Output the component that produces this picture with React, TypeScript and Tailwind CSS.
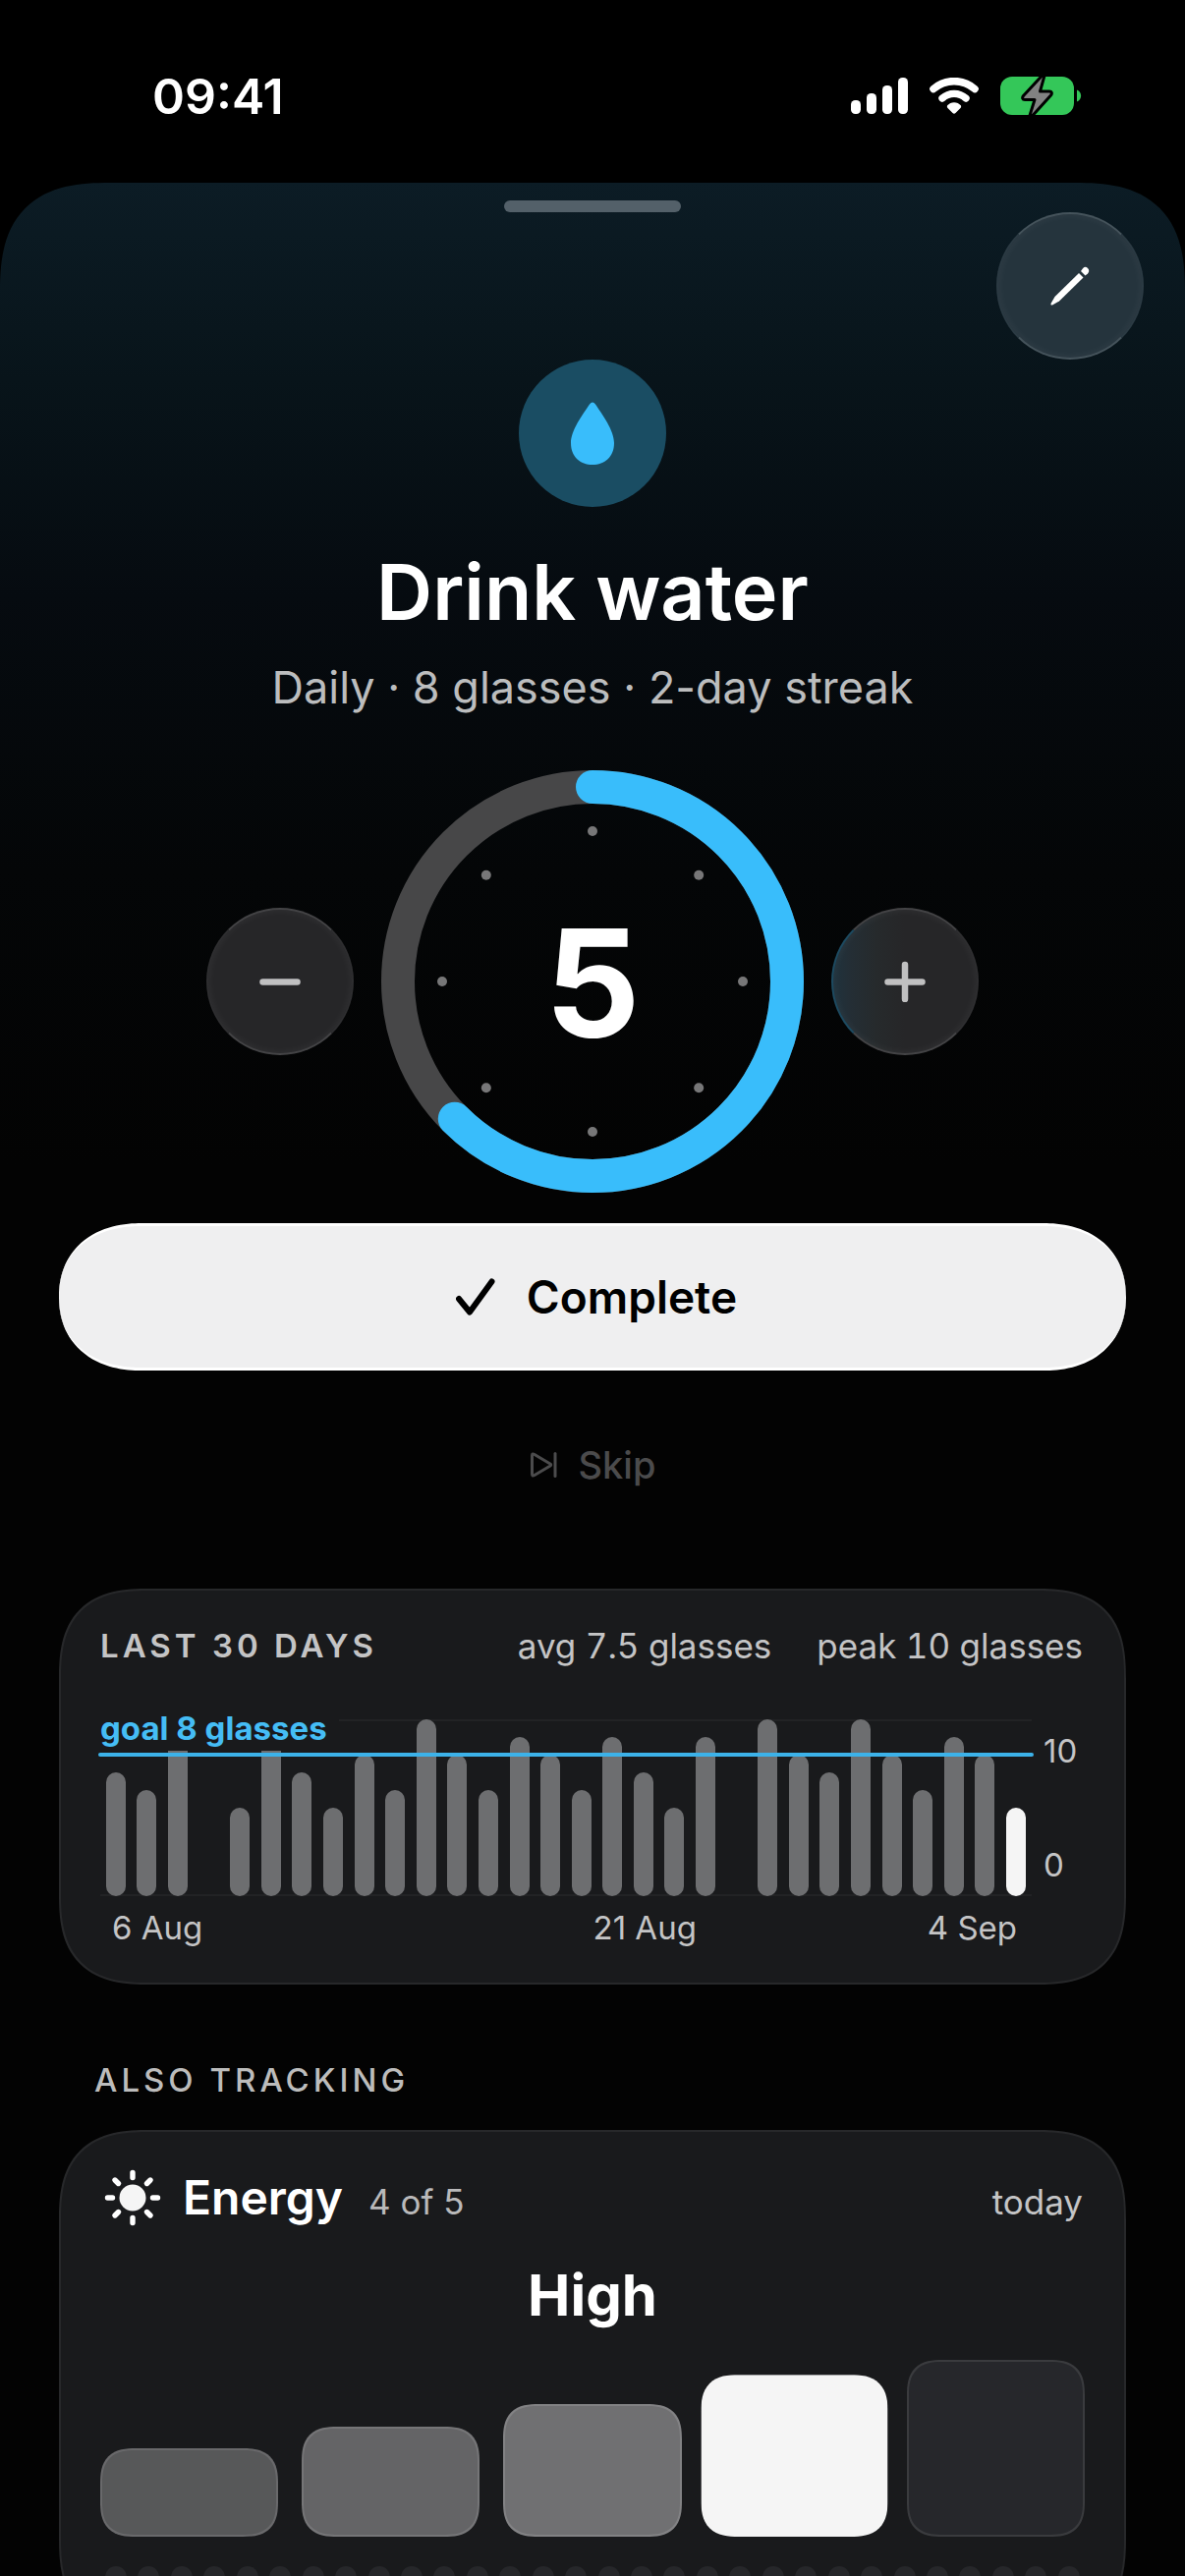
import { useState } from "react";
import { clsx } from "clsx";

const GOAL = 8;
const CHART_MAX = 10;

// glasses per day, oldest first
const HISTORY = [
  7, 6, 9, 0, 5, 9, 7, 5, 8, 6, 10, 8, 6, 9, 8, 6, 9, 7, 5, 9, 0, 10, 8, 7, 10, 8, 6, 9, 8,
];

const ENERGY_LEVELS = [
  { name: "Very low", size: "h-[90px]", color: "bg-[#575859] border-[#69696b]" },
  { name: "Low", size: "h-[112px]", color: "bg-[#646466] border-[#757577]" },
  { name: "Medium", size: "h-[135px]", color: "bg-[#707072] border-[#828284]" },
  { name: "High", size: "h-[157px]", color: "bg-[#8a8a8c] border-[#9a9a9c]" },
  { name: "Very high", size: "h-[180px]", color: "bg-[#26272b] border-[#3a3b3e]" },
];

function StatusBar() {
  return (
    <header className="flex h-[186px] items-start justify-between pt-[66px] pr-[104px] pl-[155px]">
      <span className="text-[50px] leading-[64px] font-semibold text-white">09:41</span>
      <div className="flex items-center gap-[22px] pt-3">
        <svg className="h-[38px] w-[58px]" viewBox="0 0 58 38" fill="#fff" aria-hidden="true">
          <rect x="0" y="23" width="10" height="14" rx="4.5" />
          <rect x="16" y="16" width="10" height="21" rx="4.5" />
          <rect x="32" y="8" width="10" height="29" rx="4.5" />
          <rect x="48" y="0" width="10" height="37" rx="4.5" />
        </svg>
        <svg className="h-[38px] w-[50px]" viewBox="0 0 50 38" fill="none" aria-hidden="true">
          <path d="M4 11.5C16 1 34 1 46 11.5" stroke="#fff" strokeWidth="7.6" strokeLinecap="round" />
          <path d="M13 21C20 14.8 30 14.8 37 21" stroke="#fff" strokeWidth="7.4" strokeLinecap="round" />
          <path d="M18 28.5C21.5 24 28.5 24 32 28.5Q32.5 30 31.5 31L26.5 36Q25 37.5 23.5 36L18.5 31Q17.5 30 18 28.5Z" fill="#fff" />
        </svg>
        <svg className="h-[40px] w-[84px]" viewBox="0 0 84 40" aria-hidden="true">
          <rect x="0" y="0" width="75" height="39" rx="12" fill="#34c759" />
          <path d="M78 13.5C83.5 15.5 83.5 23.5 78 25.500Z" fill="#34c759" />
          <path
            d="M42.500 -1L23.500 19.500C22 21.500 22.500 23.500 25 23.500H35L30 39.500L33 39.500L51.500 19C53 17 52.500 15 50 15H40.500L45 -1Z"
            fill="#828282"
            stroke="#000"
            strokeWidth="3"
            strokeLinejoin="round"
          />
        </svg>
      </div>
    </header>
  );
}

function ProgressRing({ value }: { value: number }) {
  const r = 198;
  const length = 2 * Math.PI * r;
  const dots = Array.from({ length: GOAL }, (_, i) => (i * 2 * Math.PI) / GOAL);

  return (
    <div className="grid size-[430px] place-items-center">
      <svg className="col-start-1 row-start-1 size-full" viewBox="0 0 430 430" fill="none" aria-hidden="true">
        <circle cx="215" cy="215" r={r} stroke="#474748" strokeWidth="34" />
        <circle
          cx="215"
          cy="215"
          r={r}
          stroke="#39bdfb"
          strokeWidth="34"
          strokeLinecap="round"
          strokeDasharray={`${length * Math.min(value / GOAL, 1)} ${length}`}
          transform="rotate(-90 215 215)"
        />
        {dots.map((a) => (
          <circle key={a} cx={215 + 153 * Math.cos(a)} cy={215 + 153 * Math.sin(a)} r="5" fill="#777778" />
        ))}
      </svg>
      <output className="col-start-1 row-start-1 pt-1 text-[152px] leading-none font-bold text-white">
        {value}
      </output>
    </div>
  );
}

const glass =
  "flex size-[150px] shrink-0 items-center justify-center rounded-full border-2 shadow-[inset_0_0_10px_rgba(255,255,255,0.06)]";

function HistoryCard({ today }: { today: number }) {
  const days = [...HISTORY, today];

  return (
    <section className="rounded-[92px] border-2 border-[#27282a] bg-[#191a1c] px-10 pt-8 pb-9 text-[#c4c4c5] [corner-shape:superellipse(1.4)]">
      <div className="flex items-center justify-between leading-[48px]">
        <h2 className="text-[33px] font-semibold tracking-[4px]">LAST 30 DAYS</h2>
        <p className="flex gap-[46px] pr-[2px] text-[35px] tabular-nums">
          <span>avg 7.5 glasses</span>
          <span>peak 10 glasses</span>
        </p>
      </div>

      <div className="mt-[51px] flex h-[180px]">
        <div className="relative flex flex-1 items-end border-y-2 border-[#222325]">
          {days.map((v, i) => (
            <div key={i} className="-my-[2px] flex h-[180px] flex-1 items-end justify-center">
              <div
                className={clsx(
                  "w-5 rounded-full",
                  i === days.length - 1 ? "bg-[#f5f5f5]" : "bg-[#6d6e70]"
                )}
                style={{ height: `${(v / CHART_MAX) * 100}%` }}
              />
            </div>
          ))}
          {/* goal marker sits over the bars */}
          <span className="absolute -top-4 left-0 bg-[#191a1c] pr-3 text-[33px] leading-[46px] font-bold text-[#45bdf5]">
            goal 8 glasses
          </span>
          <div className="absolute -inset-x-[2px] top-[32px] h-1 rounded-full bg-[#3cb2e9]" />
        </div>
        <div className="flex w-[54px] flex-col justify-between py-3 pl-3 text-[33px] leading-10">
          <span>10</span>
          <span>0</span>
        </div>
      </div>

      <div className="mt-3 grid grid-cols-[489fr_431fr] pr-[69px] pl-3 text-[33px] leading-10">
        <span>6 Aug</span>
        <div className="flex justify-between">
          <span>21 Aug</span>
          <span>4 Sep</span>
        </div>
      </div>
    </section>
  );
}

function EnergyCard() {
  const [level, setLevel] = useState(3);

  return (
    <section className="mt-[31px] rounded-[92px] border-2 border-[#27282a] bg-[#191a1c] px-10 pt-[37px] pb-10 [corner-shape:superellipse(1.4)]">
      <div className="flex h-[60px] items-baseline leading-[60px]">
        <svg className="mr-[22px] ml-1 size-[58px] self-center" viewBox="0 0 58 58" aria-hidden="true">
          <circle cx="29" cy="29" r="13.5" fill="#f5f5f5" />
          <g stroke="#fff" strokeWidth="5.4" strokeLinecap="round">
            <path d="M29 3.5V8.5M29 49.5V54.5M3.5 29H8.5M49.5 29H54.5" />
            <path d="M11 11L14.5 14.5M43.5 43.5L47 47M11 47L14.5 43.5M43.5 14.5L47 11" />
          </g>
        </svg>
        <h3 className="text-[48px] font-semibold text-white">Energy</h3>
        <span className="ml-[26px] text-[35px] text-[#b9b9ba]">{level + 1} of 5</span>
        <span className="ml-auto pr-[2px] text-[35px] text-[#c4c4c5]">today</span>
      </div>
      <p className="mt-[33px] text-center text-[58px] leading-[72px] font-bold text-white">
        {ENERGY_LEVELS[level].name}
      </p>
      <div className="mt-[30px] flex h-[180px] items-end gap-6">
        {ENERGY_LEVELS.map((l, i) => (
          <button
            key={l.name}
            aria-label={l.name}
            aria-pressed={i === level}
            onClick={() => setLevel(i)}
            className={clsx(
              "flex-1 rounded-[36px] border-2 [corner-shape:superellipse(1.4)]",
              l.size,
              i === level
                ? "origin-bottom scale-105 border-[#f5f5f5] bg-[#f5f5f5]"
                : l.color
            )}
          />
        ))}
      </div>
      <div className="mt-[30px] flex justify-between px-[5px]">
        {HISTORY.map((_, i) => (
          <span key={i} className="size-[22px] rounded-full bg-[#26272a]" />
        ))}
        <span className="size-[22px] rounded-full bg-[#26272a]" />
      </div>
    </section>
  );
}

export default function App() {
  const [glasses, setGlasses] = useState(5);

  return (
    <div className="h-screen overflow-hidden bg-black font-['Inter','Liberation_Sans',sans-serif]">
      <StatusBar />
      <main className="min-h-full rounded-t-[112px] bg-[linear-gradient(180deg,#0c1c25_0px,#08141a_200px,#060b10_420px,#040607_700px,#030303_1000px)] pt-[18px] [corner-shape:superellipse(1.4)]">
        <div className="mx-auto h-3 w-[180px] rounded-full bg-[#536069]" />
        <div className="flex justify-end pr-[42px]">
          <button
            aria-label="Edit"
            className={clsx(glass, "border-x-[#2b3a43] border-y-[#45535b] bg-[#25343d]")}
          >
            <svg className="size-[42px]" viewBox="0 0 42 42" fill="#fff" aria-hidden="true">
              <path d="M30 8L34.5 12.5L10 36.5L3 40.5Q1 41 1.5 39L5.5 32Z" />
              <path d="M32 6L34 3.200Q36.500 0.500 39 3Q41.500 5.500 39 8.500L36.500 10.500Z" />
            </svg>
          </button>
        </div>

        <div className="flex flex-col items-center">
          <div className="flex size-[150px] items-center justify-center rounded-full bg-[#1a4d63]">
            <svg className="h-[66px] w-[46px]" viewBox="0 0 46 66" fill="#39bdfb" aria-hidden="true">
              <path d="M20 3.5Q23 -0.5 26 3.5C33 14 45 30 45 43C45 57 35.5 65 23 65C10.5 65 1 57 1 43C1 30 13 14 20 3.5Z" />
            </svg>
          </div>
          <h1 className="mt-[38px] text-[79px] leading-[96px] font-semibold text-white">Drink water</h1>
          <p className="mt-5 text-[45px] leading-[60px] text-[#bcbdbe]">
            Daily · 8 glasses · 2-day streak
          </p>

          <div className="mt-[54px] flex items-center gap-7">
            <button
              aria-label="Remove a glass"
              onClick={() => setGlasses((n) => Math.max(0, n - 1))}
              className={clsx(glass, "border-x-[#2e2e30] border-y-[#434345] bg-[#262628]")}
            >
              <svg className="size-[42px]" viewBox="0 0 42 42" aria-hidden="true">
                <path d="M3.5 21.5H38.5" stroke="#c0c0c1" strokeWidth="6.5" strokeLinecap="round" />
              </svg>
            </button>
            <ProgressRing value={glasses} />
            <button
              aria-label="Add a glass"
              onClick={() => setGlasses((n) => n + 1)}
              className={clsx(
                glass,
                "border-x-[#2e2e30] border-y-[#434345] border-l-[#1d4a60] bg-[linear-gradient(90deg,#1f323d_0%,#242e35_12%,#262a2c_30%,#262628_50%)]"
              )}
            >
              <svg className="size-[42px]" viewBox="0 0 42 42" aria-hidden="true">
                <path d="M3.5 21.5H38.5M21 4V39" stroke="#c0c0c1" strokeWidth="6.5" strokeLinecap="round" />
              </svg>
            </button>
          </div>
        </div>

        <div className="px-[60px] pt-[31px]">
          <button className="flex h-[150px] w-full items-center justify-center gap-8 rounded-[84px/75px] border-y-3 border-white bg-[#efeff0] pl-2 text-[46px] font-semibold text-black [corner-shape:superellipse(1.15)]">
            <svg className="h-[38px] w-[40px]" viewBox="0 0 40 38" fill="none" aria-hidden="true">
              <path d="M3 21L14 34.5L36.5 3.5" stroke="#000" strokeWidth="6" strokeLinecap="round" strokeLinejoin="round" />
            </svg>
            Complete
          </button>
          <button className="mx-auto mt-12 flex h-24 items-center gap-[22px] px-10 text-[38px] font-medium text-[#4b4b4c]">
            <svg className="size-7" viewBox="0 0 28 28" fill="none" stroke="#4b4b4c" strokeWidth="3" strokeLinecap="round" strokeLinejoin="round" aria-hidden="true">
              <path d="M2.5 4.5Q2.5 2 5 3.5L21 13Q22.5 14 21 15L5 24.5Q2.5 26 2.5 23.5Z" />
              <path d="M26 2.5V25.5" />
            </svg>
            Skip
          </button>

          <div className="pt-[78px]">
            <HistoryCard today={glasses} />
          </div>

          <h2 className="mt-[77px] pl-9 text-[33px] leading-10 font-medium tracking-[4px] text-[#bcbcbc]">
            ALSO TRACKING
          </h2>
          <EnergyCard />
        </div>
      </main>
    </div>
  );
}
